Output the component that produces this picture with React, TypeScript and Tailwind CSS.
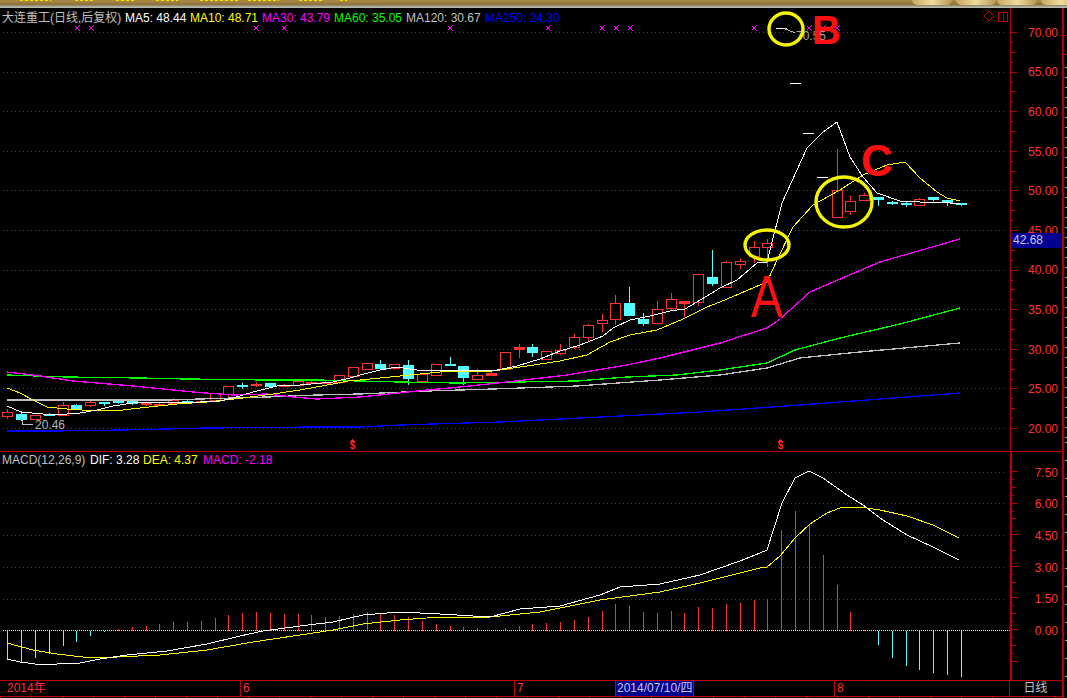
const UP = '#ff3232';
const DOWN = '#54ffff';
const GRID = '#e80000';
const AXIS = '#b80000';

const barX = (i: number) => Math.round(7.3 + 13.82 * i) + 0.5;

// index, body top, body bottom, wick top, wick bottom, colour (page pixels)
type Candle = [number, number, number, number, number, 'r' | 'c'];
const candles: Candle[] = [
  [0, 412, 416, 409, 419, 'r'], [1, 414, 419, 411, 421, 'c'], [2, 415, 419, 415, 419, 'r'],
  [3, 414, 415, 413, 416, 'c'], [4, 405, 415, 402, 415, 'r'], [5, 405, 409, 404, 410, 'c'],
  [6, 402, 405, 399, 407, 'r'], [7, 402, 403, 402, 406, 'c'], [8, 401, 402, 399, 404, 'c'],
  [9, 401, 403, 401, 405, 'c'], [10, 403, 404, 402, 406, 'r'], [11, 404, 405, 403, 406, 'r'],
  [12, 400, 403, 398, 405, 'r'], [13, 401, 402, 400, 403, 'c'], [14, 401, 402, 400, 403, 'r'],
  [15, 393, 400, 393, 402, 'r'], [16, 386, 394, 386, 397, 'r'], [17, 385, 386, 383, 389, 'c'],
  [18, 384, 385, 382, 387, 'r'], [19, 383, 386, 383, 387, 'c'], [20, 385, 386, 384, 387, 'r'],
  [21, 381, 385, 381, 386, 'r'], [22, 382, 383, 380, 384, 'r'], [23, 382, 383, 381, 384, 'r'],
  [24, 375, 382, 375, 384, 'r'], [25, 367, 376, 367, 378, 'r'], [26, 363, 369, 363, 370, 'r'],
  [27, 364, 368, 360, 370, 'c'], [28, 364, 368, 364, 370, 'r'], [29, 365, 378, 360, 385, 'c'],
  [30, 374, 381, 374, 381, 'r'], [31, 364, 375, 364, 376, 'r'], [32, 364, 365, 357, 365, 'c'],
  [33, 366, 377, 366, 385, 'c'], [34, 375, 379, 369, 379, 'r'], [35, 373, 375, 371, 375, 'r'],
  [36, 352, 369, 352, 370, 'r'], [37, 347, 349, 344, 358, 'r'], [38, 347, 352, 344, 357, 'c'],
  [39, 351, 359, 351, 359, 'r'], [40, 350, 353, 344, 355, 'r'], [41, 337, 347, 334, 349, 'r'],
  [42, 325, 337, 324, 342, 'r'], [43, 320, 323, 314, 332, 'r'], [44, 303, 319, 295, 325, 'r'],
  [45, 303, 315, 287, 316, 'c'], [46, 319, 323, 313, 326, 'c'], [47, 309, 323, 301, 324, 'r'],
  [48, 299, 308, 293, 310, 'r'], [49, 301, 303, 301, 317, 'r'], [50, 274, 302, 274, 306, 'r'],
  [51, 277, 283, 250, 286, 'c'], [52, 262, 287, 261, 287, 'r'], [53, 261, 264, 258, 269, 'r'],
  [54, 247, 256, 241, 263, 'r'], [55, 243, 247, 239, 267, 'r'],
  [60, 190, 217, 149, 217, 'r'], [61, 201, 211, 196, 215, 'r'], [62, 195, 200, 193, 200, 'r'],
  [63, 197, 199, 197, 206, 'c'], [64, 202, 203, 201, 205, 'c'], [65, 203, 204, 201, 207, 'c'],
  [66, 199, 205, 198, 205, 'r'], [67, 197, 199, 197, 201, 'c'], [68, 200, 202, 200, 206, 'c'],
  [69, 203, 204, 203, 206, 'c'],
];

const limitDashes: [number, number][] = [[781, 28], [795, 83], [808, 133], [822, 177]];

const ma5 = '7,406 21,412 43,414 67,414 80,413 97,410 113,406 140,402 167,403 200,402 220,401 233,398 253,392 277,386 300,385 333,382 350,378 360,375 380,370 397,367 417,370 443,370 473,371 497,370 517,366 540,359 560,351 580,345 603,336 613,328 630,320 650,316 670,311 685,309 707,296 720,288 737,280 757,263 767,262 782,203 807,148 823,132 837,122 850,157 863,177 877,193 900,201 920,202 940,202 960,204';
const ma10 = '7,388 20,393 33,400 47,407 67,409 97,411 123,410 140,408 177,404 207,402 243,398 273,394 300,390 333,384 353,380 360,380 400,376 440,372 493,371 527,366 560,361 587,355 610,342 630,335 657,330 683,319 707,307 720,302 767,282 778,258 793,227 813,205 840,190 863,175 887,165 905,162 920,178 937,192 947,198 960,201';
const ma30 = '7,372 33,375 73,381 133,386 193,392 233,395 267,394 293,397 317,399 360,397 427,390 460,387 507,382 567,375 627,365 660,358 720,343 767,328 780,319 810,292 880,262 960,239';
const ma60 = '7,375 67,377 140,378 187,379 267,380 317,380 360,381 400,382 457,383 577,381 627,377 677,375 720,370 767,363 795,350 840,338 900,324 960,308';
const ma120 = '7,400 167,400 200,399 267,397 317,395 360,394 427,391 493,389 577,386 660,380 720,375 767,368 800,358 860,352 960,343';
const ma250 = '7,431 53,431 123,430 207,428 317,427 360,427 400,425 500,422 600,417 700,412 800,405 880,399 960,393';

const dif = '7,659 20,662 43,665 57,664 80,663 100,659 127,655 167,651 207,644 240,636 263,631 300,626 333,622 363,615 400,612 440,614 490,617 520,609 560,606 600,595 620,587 660,584 700,575 740,561 760,553 767,550 782,503 795,478 809,471 823,478 847,495 863,505 883,520 907,535 933,547 959,560';
const dea = '7,643 33,650 57,654 83,657 117,657 160,655 207,650 253,642 300,635 333,630 363,624 400,620 440,617 490,617 540,612 600,600 660,592 700,583 760,568 767,567 780,556 795,538 810,524 827,513 840,508 860,507 880,510 907,516 933,525 959,538';

// histogram heights in pixels, one per bar, positive is up
const macdBars = [-29, -31, -27, -23, -15, -11, -5, -1, 2, 4, 5, 7, 9, 9, 10, 13, 16, 18, 19, 18, 17, 17, 16, 14, 15, 17, 19, 17, 16, 14, 10, 7, 5, 4, 3, 1, 3, 5, 7, 8, 9, 11, 14, 20, 27, 25, 19, 18, 20, 18, 24, 23, 27, 28, 31, 32, 101, 120, 107, 76, 46, 19, 1, -14, -27, -35, -39, -42, -44, -46];

const xMarks = [77, 91, 256, 284, 450, 548, 602, 616, 630, 754, 809, 823, 837];
const priceLines = [32, 72, 111.5, 151, 190.5, 230.5, 270, 309.5, 349, 388.5, 428];
const macdLines = [472, 503.5, 535, 567, 599];
const priceLabels = ['70.00', '65.00', '60.00', '55.00', '50.00', '45.00', '40.00', '35.00', '30.00', '25.00', '20.00'];
const macdLabels = ['7.50', '6.00', '4.50', '3.00', '1.50', '0.00'];
const yellowBits = [[20, 31], [24, 20], [21, 20], [20, 22], [22, 38], [10, 31], [20, 24], [17, 7]];
const tabs = [912, 956, 997, 1041];

const TopStrip = () => (
  <div className="h-[8px] shrink-0 flex flex-col">
    <div className="relative h-[5px] bg-gradient-to-b from-[#a88c48] to-[#8c7038] flex">
      <div className="w-[377px] h-[2px] flex bg-[#a8873f]">
        {yellowBits.map(([gap, width], i) => (
          <div
            key={i}
            className="h-[1px] bg-[repeating-linear-gradient(90deg,#f4e000_0_3px,transparent_3px_5px)]"
            style={{ marginLeft: gap, width }}
          />
        ))}
      </div>
      {tabs.map((left) => (
        <div
          key={left}
          className="absolute top-0 h-[5px] w-[40px] rounded-b-lg bg-gradient-to-r from-[#c8a860] via-[#eedc9c] to-[#b89850]"
          style={{ left }}
        />
      ))}
    </div>
    <div className="h-[3px] bg-gradient-to-b from-[#8c8468] to-[#c4c4bc]" />
  </div>
);

const Legend = ({ items, top }: { items: [string, string, number][]; top: number }) => (
  <div className="absolute left-[2px] flex text-[12px] leading-[14px] whitespace-nowrap" style={{ top }}>
    {items.map(([text, color, width]) => (
      <span key={text} className="block" style={{ color, width }}>
        {text}
      </span>
    ))}
  </div>
);

const MainChart = () => (
  <svg width="1010" height="443" viewBox="0 8 1010 443" className="absolute inset-0">
    <g shapeRendering="crispEdges">
      {priceLines.map((y) => (
        <line key={y} x1="3" x2="1005" y1={y} y2={y} stroke={GRID} strokeDasharray="1 3" />
      ))}
      {xMarks.map((x) => (
        <g key={x} stroke="#ff00ff" fill="#ff00ff">
          <line x1={x - 2} x2={x + 3} y1="26" y2="31" />
          <line x1={x - 2} x2={x + 3} y1="30" y2="25" />
          <rect x={x - 0.5} y="27.5" width="1" height="1" />
        </g>
      ))}
      {candles.map(([i, top, bottom, wickTop, wickBottom, kind]) => {
        const x = barX(i);
        const color = kind === 'r' ? UP : DOWN;
        const thin = bottom - top < 3;
        return (
          <g key={i}>
            <line x1={x} x2={x} y1={wickTop} y2={wickBottom} stroke={color} />
            <rect
              x={x - 5}
              y={top + 0.5}
              width="10"
              height={bottom - top}
              stroke={color}
              fill={kind === 'c' || thin ? color : '#000'}
            />
          </g>
        );
      })}
      {limitDashes.map(([x, y]) => (
        <line key={x} x1={x - 5} x2={x + 6} y1={y + 0.5} y2={y + 0.5} stroke="#fff" />
      ))}
      <polyline points={ma250} fill="none" stroke="#0000ff" strokeWidth="1.3" />
      <polyline points={ma120} fill="none" stroke="#c0c0c0" strokeWidth="1.3" />
      <polyline points={ma60} fill="none" stroke="#00ff00" strokeWidth="1.3" />
      <polyline points={ma30} fill="none" stroke="#ff00ff" strokeWidth="1.3" />
      <polyline points={ma10} fill="none" stroke="#ffff00" />
      <polyline points={ma5} fill="none" stroke="#fff" />
      {/* high and low callouts */}
      <polyline points="783,28 795,33" fill="none" stroke="#c0c0c0" />
      <polyline points="22,420 22,424 33,424" fill="none" stroke="#c0c0c0" />
      {[352, 780].map((x) => (
        <polygon key={x} points={`${x - 2},442 ${x + 3},442 ${x + 0.5},439`} fill="#ff2020" />
      ))}
      {/* window buttons */}
      <polygon points="989,11 994,16 989,21 984,16" fill="none" stroke="#c00000" />
      <rect x="998.5" y="12.5" width="9" height="9" fill="none" stroke="#c00000" />
      <line x1="1003.5" x2="1003.5" y1="12" y2="22" stroke="#c00000" />
    </g>
    <text x="35" y="429" fontSize="12" fill="#b4b4b4">20.46</text>
    <text x="796" y="40" fontSize="12" fill="#a8a8a8">70.55</text>
    <text x="352.5" y="449" fontSize="10" fontWeight="700" textAnchor="middle" fill="#ff2020">$</text>
    <text x="780.5" y="449" fontSize="10" fontWeight="700" textAnchor="middle" fill="#ff2020">$</text>
    <ellipse cx="786" cy="29" rx="17" ry="16" fill="none" stroke="#f4f400" strokeWidth="3.4" />
    <ellipse cx="767" cy="245" rx="22" ry="15" fill="none" stroke="#f4f400" strokeWidth="3.4" />
    <ellipse cx="844" cy="202" rx="28" ry="25" fill="none" stroke="#f4f400" strokeWidth="3.4" />
  </svg>
);

const MacdChart = () => (
  <svg width="1010" height="228" viewBox="0 452 1010 228" className="absolute inset-0">
    <g shapeRendering="crispEdges">
      {macdLines.map((y) => (
        <line key={y} x1="3" x2="1005" y1={y} y2={y} stroke={GRID} strokeDasharray="1 3" />
      ))}
      {macdBars.map((h, i) => (
        <line
          key={i}
          x1={barX(i)}
          x2={barX(i)}
          y1="630.5"
          y2={630.5 - h}
          stroke={h > 0 ? UP : DOWN}
        />
      ))}
      <line x1="3" x2="1010" y1="630.5" y2="630.5" stroke="#e8e8e8" strokeDasharray="1 1" />
      <polyline points={dea} fill="none" stroke="#ffff00" />
      <polyline points={dif} fill="none" stroke="#fff" />
    </g>
  </svg>
);

const AxisTicks = ({ count, first, step, height }: { count: number; first: number; step: number; height: number }) => (
  <svg width="9" height={height} className="absolute left-0 top-0" shapeRendering="crispEdges">
    {Array.from({ length: count }, (_, i) => first + (step / 4) * i).map((y, i) => (
      <line
        key={i}
        x1="0"
        x2={i % 4 === 0 ? 6 : i % 2 === 0 ? 4 : 2}
        y1={y}
        y2={y}
        stroke={AXIS}
      />
    ))}
  </svg>
);

const AxisLabels = ({ labels, rowHeight }: { labels: string[]; rowHeight: string }) => (
  <div className="flex flex-col pt-[5px] text-[12px] text-[#ff3232]">
    {labels.map((label) => (
      <div key={label} className={`${rowHeight} flex items-center justify-end pr-[4px]`}>
        {label}
      </div>
    ))}
  </div>
);

const DateRow = () => (
  <div className="h-[17px] shrink-0 flex border-y border-[#c00000] text-[12px] leading-[15px] text-[#ff3232]">
    <div className="w-[241px] pl-[7px] border-r border-[#c00000]">2014年</div>
    <div className="w-[274px] pl-[2px] border-r border-[#c00000]">6</div>
    <div className="w-[100px] pl-[2px]">7</div>
    <div className="w-[79px] bg-[#000090] text-[#c8c8f0] pl-[1px] border-x border-[#c00000] whitespace-nowrap">2014/07/10/四</div>
    <div className="w-[141px] border-r border-[#c00000]" />
    <div className="w-[175px] pl-[2px] border-r border-[#c00000]">8</div>
    <div className="w-[51px] text-center text-[#c0c0c0]">日线</div>
  </div>
);

const SideStrip = () => (
  <div className="w-[5px] border-l-2 border-[#b00000] flex flex-col">
    <div className="h-[20px] mt-[27px] border-y border-[#b00000] shrink-0" />
    <div className="flex flex-col gap-[9px] pt-[12px] pl-[1px]">
      {Array.from({ length: 38 }, (_, i) => (
        <div key={i} className="h-[1px] w-[3px] bg-[#a0a0a0]" />
      ))}
    </div>
    <div className="flex flex-col gap-[17px] pt-[4px] pl-[1px]">
      {Array.from({ length: 14 }, (_, i) => (
        <div key={i} className="h-[1px] w-[3px] bg-[#a0a0a0]" />
      ))}
    </div>
  </div>
);

export default function App() {
  return (
    <div className="w-[1067px] h-[698px] bg-black overflow-hidden flex flex-col font-['Liberation_Sans','Noto_Sans_CJK_SC',sans-serif]">
      <TopStrip />
      <div className="flex flex-1 min-h-0">
        <div className="w-[1062px] shrink-0 flex flex-col">
          {/* price panel */}
          <div className="h-[443px] shrink-0 flex">
            <div className="relative w-[1010px] shrink-0">
              <MainChart />
              <Legend
                top={3}
                items={[
                  ['大连重工(日线,后复权)', '#c0c0c0', 123],
                  ['MA5: 48.44', '#ffffff', 65],
                  ['MA10: 48.71', '#ffff00', 72],
                  ['MA30: 43.79', '#ff00ff', 72],
                  ['MA60: 35.05', '#00ff00', 72],
                  ['MA120: 30.67', '#c0c0c0', 79],
                  ['MA250: 24.30', '#0000ff', 80],
                ]}
              />
              <span className="absolute left-[747px] top-[259px] text-[60px] leading-[60px] text-[#ff1010] scale-x-[0.8]">A</span>
              <span className="absolute left-[812px] top-[2px] text-[40px] leading-[40px] font-bold text-[#ff1010]">B</span>
              <span className="absolute left-[861px] top-[131px] text-[44px] leading-[44px] font-bold text-[#ff1010]">C</span>
            </div>
            <div className="relative w-[52px] border-l border-[#b80000]">
              <AxisTicks count={41} first={24.5} step={39.6} height={443} />
              <AxisLabels labels={priceLabels} rowHeight="h-[39.6px]" />
              <div className="absolute left-0 top-[225px] w-[50px] h-[15px] bg-[#000090] text-[#c8c8f0] text-[12px] leading-[15px] pl-[2px]">42.68</div>
            </div>
          </div>
          {/* macd panel */}
          <div className="h-[229px] shrink-0 flex border-t border-[#c00000]">
            <div className="relative w-[1010px] shrink-0">
              <MacdChart />
              <Legend
                top={1}
                items={[
                  ['MACD(12,26,9)', '#c0c0c0', 88],
                  ['DIF: 3.28', '#ffffff', 53],
                  ['DEA: 4.37', '#ffff00', 60],
                  ['MACD: -2.18', '#ff00ff', 80],
                ]}
              />
            </div>
            <div className="relative w-[52px] border-l-2 border-[#c00000]">
              <AxisTicks count={25} first={19.5} step={31.6} height={228} />
              <AxisLabels labels={macdLabels} rowHeight="h-[31.6px]" />
            </div>
          </div>
          <DateRow />
          <div className="h-[1px] bg-[repeating-linear-gradient(90deg,#c00000_0_1px,transparent_1px_31px)]" />
        </div>
        <SideStrip />
      </div>
    </div>
  );
}
